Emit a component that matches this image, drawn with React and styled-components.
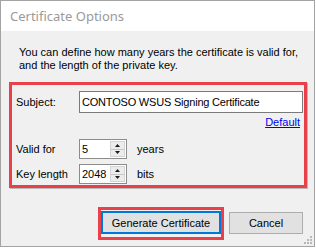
import React from "react";
import styled, { createGlobalStyle } from "styled-components";

const GlobalStyle = createGlobalStyle`
  html, body {
    margin: 0;
    padding: 0;
    background: #ffffff;
  }
  body {
    font-family: "Liberation Sans", Arial, sans-serif;
  }
`;

const Window = styled.div`
  position: relative;
  box-sizing: border-box;
  width: 315px;
  height: 247px;
  border: 1px solid #a3a3a3;
  display: flex;
  flex-direction: column;
  background: #f0f0f0;
`;

const TitleBar = styled.div`
  height: 30px;
  background: #ffffff;
  display: flex;
  align-items: center;
  padding-left: 9px;
  font-family: "Noto Sans", "Open Sans", sans-serif;
  font-size: 13px;
  color: #9a9a9a;
`;

const Body = styled.div`
  flex: 1;
  padding: 15px 7px 0 8px;
  font-size: 11px;
  color: #000;
`;

const Intro = styled.p`
  margin: 0 0 0 10px;
  line-height: 13px;
`;

const Highlight = styled.div`
  border: 3px solid #e8414a;
  box-shadow: 1px 1px 0 #b9b9b9;
`;

const Group = styled(Highlight)`
  margin-top: 10px;
  padding: 6px 1px 1px 4px;
  display: flex;
  flex-direction: column;
`;

const Row = styled.div`
  display: flex;
  align-items: center;
  height: ${(p) => p.$h || 20}px;
  margin-top: ${(p) => p.$mt || 0}px;
`;

const Label = styled.span`
  width: 63px;
  flex: none;
`;

const TextBox = styled.div`
  box-sizing: border-box;
  flex: 1;
  height: 22px;
  border: 1px solid #7a7a7a;
  background: #fff;
  display: flex;
  align-items: center;
  padding-left: 2px;
  font-size: 11px;
  letter-spacing: -0.2px;
`;

const LinkRow = styled.div`
  margin-top: 3px;
  line-height: 13px;
  text-align: right;
  padding-right: 3px;
`;

const Link = styled.a`
  color: #0000ee;
  text-decoration: underline;
  cursor: pointer;
`;

const Spinner = styled.div`
  box-sizing: border-box;
  width: 48px;
  height: 100%;
  border: 1px solid #8c8c8c;
  background: #fff;
  display: flex;
`;

const SpinValue = styled.span`
  flex: 1;
  display: flex;
  align-items: center;
  padding-left: 2px;
`;

const SpinButtons = styled.div`
  width: 13px;
  margin: 1px 1px 1px 0;
  display: flex;
  flex-direction: column;
  border: 1px solid #d4d4d4;
  background: #ececec;
`;

const SpinButton = styled.div`
  flex: 1;
  display: flex;
  align-items: center;
  justify-content: center;
  & + & {
    border-top: 1px solid #c6c6c6;
  }
`;

const Unit = styled.span`
  margin-left: 10px;
`;

const ButtonRow = styled.div`
  display: flex;
  justify-content: flex-end;
  align-items: flex-start;
  gap: 5px;
  margin-top: 19px;
  padding-right: 4px;
`;

const ButtonHighlight = styled(Highlight)`
  padding: 1px 0 3px 0;
  box-shadow: none;
`;

const Button = styled.button`
  box-sizing: border-box;
  width: ${(p) => p.$w}px;
  height: ${(p) => p.$h}px;
  margin-top: ${(p) => p.$mt || 0}px;
  background: #e1e1e1;
  border: ${(p) => (p.$default ? "2px solid #0078d7" : "1px solid #adadad")};
  font-family: "Liberation Sans", Arial, sans-serif;
  font-size: 11px;
  color: #000;
  padding: 0;
`;

const Grip = styled.svg`
  position: absolute;
  right: 1px;
  bottom: 1px;
`;

const Arrow = ({ down }) => (
  <svg width="5" height="3" viewBox="0 0 5 3">
    <path d={down ? "M0 0h5L2.5 3z" : "M2.5 0L5 3H0z"} fill="#1a1a1a" />
  </svg>
);

const NumberBox = ({ value }) => (
  <Spinner>
    <SpinValue>{value}</SpinValue>
    <SpinButtons>
      <SpinButton>
        <Arrow />
      </SpinButton>
      <SpinButton>
        <Arrow down />
      </SpinButton>
    </SpinButtons>
  </Spinner>
);

const App = () => {
  return (
    <>
      <GlobalStyle />
      <Window>
        <TitleBar>Certificate Options</TitleBar>
        <Body>
          <Intro>
            You can define how many years the certificate is valid for,
            <br />
            and the length of the private key.
          </Intro>
          <Group>
            <Row $h={22}>
              <Label>Subject:</Label>
              <TextBox>CONTOSO WSUS Signing Certificate</TextBox>
            </Row>
            <LinkRow>
              <Link>Default</Link>
            </LinkRow>
            <Row $mt={10}>
              <Label>Valid for</Label>
              <NumberBox value="5" />
              <Unit>years</Unit>
            </Row>
            <Row $mt={5}>
              <Label>Key length</Label>
              <NumberBox value="2048" />
              <Unit>bits</Unit>
            </Row>
          </Group>
          <ButtonRow>
            <ButtonHighlight>
              <Button $w={120} $h={23} $default>
                Generate Certificate
              </Button>
            </ButtonHighlight>
            <Button $w={74} $h={22} $mt={5}>
              Cancel
            </Button>
          </ButtonRow>
        </Body>
        <Grip width="10" height="10" viewBox="0 0 10 10">
          {[
            [7, 1],
            [4, 4],
            [7, 4],
            [1, 7],
            [4, 7],
            [7, 7],
          ].map(([x, y]) => (
            <rect key={`${x}-${y}`} x={x} y={y} width="2" height="2" fill="#b8b8b8" />
          ))}
        </Grip>
      </Window>
    </>
  );
};

export default App;
